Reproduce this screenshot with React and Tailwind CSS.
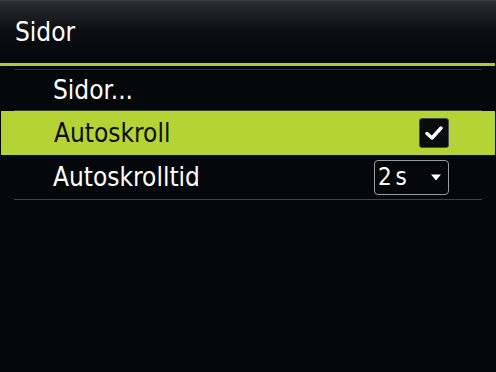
import React from "react";

const font = { fontFamily: '"DejaVu Sans Condensed", "DejaVu Sans", sans-serif' };

export default function App() {
  return (
    <div
      className="w-[496px] h-[372px] bg-[#05080a] overflow-hidden flex flex-col font-stretch-condensed"
      style={font}
    >
      <div className="h-[63px] shrink-0 bg-gradient-to-b from-[#2c2e33] via-[#0b0d10] to-[#05080a] border-t border-[#3a3c40] flex items-start pt-[14px] pl-[15px]">
        <span className="text-[26px] leading-[34px] text-white">Sidor</span>
      </div>
      <div className="h-[3px] shrink-0 bg-[#aecb36] mr-[1px]" />
      <div className="mt-[3px] mx-[14px] h-px bg-[#2f3520]" />
      <div className="h-[41px] mx-[14px] border-b border-[#3a4224] flex items-center pl-[39px]">
        <span className="text-[26px] leading-none text-white">Sidor...</span>
      </div>
      <div className="h-[44px] bg-[#b5d335] flex items-center pl-[53px] pr-[46px] ml-[1px] mr-[1px]">
        <span className="text-[26px] leading-none text-[#0b0d08] flex-1">Autoskroll</span>
        <div className="w-[30px] h-[30px] bg-[#0a0b0c] border border-[#4a4d50] rounded-[3px] flex items-center justify-center">
          <svg width="18" height="16" viewBox="0 0 18 16">
            <path d="M2 8.5 L7 13 L16 3" fill="none" stroke="white" strokeWidth="3.4" strokeLinecap="round" strokeLinejoin="round" />
          </svg>
        </div>
      </div>
      <div className="h-[45px] mx-[14px] border-b border-[#3f4a22] flex items-center pl-[39px] pr-[33px]">
        <span className="text-[26px] leading-none text-white flex-1">Autoskrolltid</span>
        <div className="w-[75px] h-[35px] border border-[#9a9c9e] rounded-[4px] flex items-center pl-[3px] pr-[7px]">
          <span className="text-[24px] leading-none text-white flex-1 [word-spacing:-3px]">2 s</span>
          <svg width="10" height="7" viewBox="0 0 10 7">
            <path d="M0 0.5 L10 0.5 L5 6.5 Z" fill="white" />
          </svg>
        </div>
      </div>
    </div>
  );
}
